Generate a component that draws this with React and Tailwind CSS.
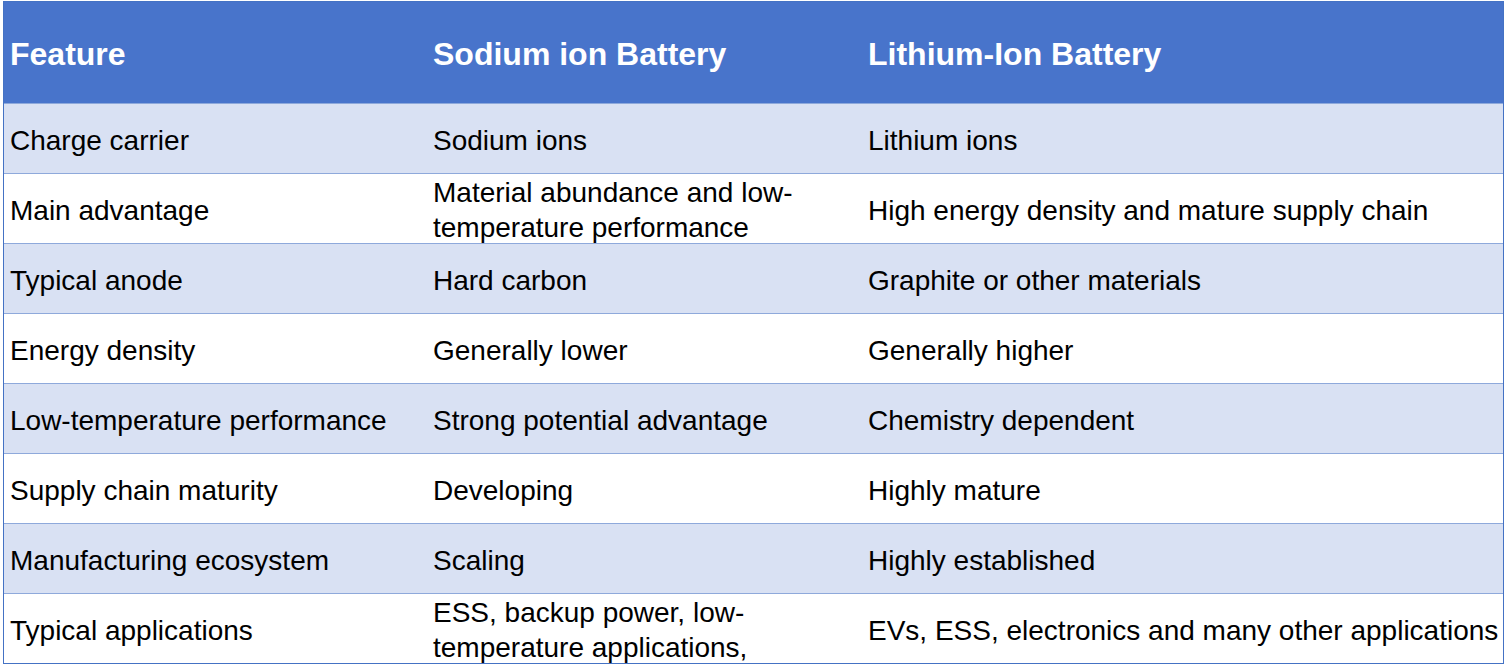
import React from "react";

const rows = [
  ["Charge carrier", "Sodium ions", "Lithium ions"],
  [
    "Main advantage",
    "Material abundance and low-temperature performance",
    "High energy density and mature supply chain",
  ],
  ["Typical anode", "Hard carbon", "Graphite or other materials"],
  ["Energy density", "Generally lower", "Generally higher"],
  ["Low-temperature performance", "Strong potential advantage", "Chemistry dependent"],
  ["Supply chain maturity", "Developing", "Highly mature"],
  ["Manufacturing ecosystem", "Scaling", "Highly established"],
  [
    "Typical applications",
    "ESS, backup power, low-temperature applications,",
    "EVs, ESS, electronics and many other applications",
  ],
];

const App = () => {
  return (
    <div
      className="bg-white w-[1506px] h-[666px] overflow-hidden pl-[3px] pt-[1px]"
      style={{ fontFamily: '"Liberation Sans", Arial, sans-serif' }}
    >
      <div className="w-[1501px] border border-[#4472C4] text-black">
        <div className="grid grid-cols-[423px_435px_1fr] h-[101px] bg-[#4874CB] text-white font-bold text-[32px]">
          <div className="flex items-center pl-[6px] pt-[2px]">Feature</div>
          <div className="flex items-center pl-[6px] pt-[2px]">Sodium ion Battery</div>
          <div className="flex items-center pl-[6px] pt-[2px]">Lithium-Ion Battery</div>
        </div>
        {rows.map((row, id) => (
          <div
            key={id}
            className={`grid grid-cols-[423px_435px_1fr] grid-rows-[69px] h-[70px] border-t border-[#8EA9DB] text-[28px] leading-[35px] overflow-hidden ${
              id % 2 === 0 ? "bg-[#D9E1F3]" : "bg-white"
            }`}
          >
            {row.map((cell, i) => (
              <div
                key={i}
                className="flex items-center h-[69px] min-h-0 pl-[6px] pr-[4px] pt-[3px]"
              >
                {cell}
              </div>
            ))}
          </div>
        ))}
      </div>
    </div>
  );
};

export default App;
